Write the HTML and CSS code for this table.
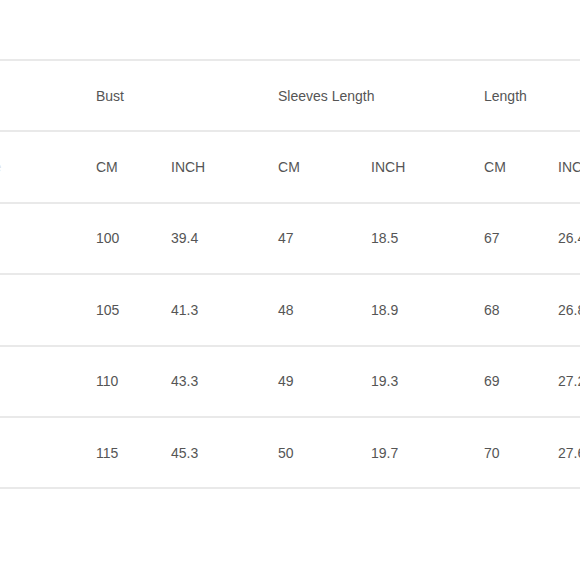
FILE: index.html
```html
<!DOCTYPE html>
<html>
<head>
<meta charset="utf-8">
<link rel="stylesheet" href="styles.css">
</head>
<body>
<div class="chart">
<table class="size-table">
  <colgroup>
    <col class="c-size">
    <col class="c-bust-cm">
    <col class="c-bust-in">
    <col class="c-sl-cm">
    <col class="c-sl-in">
    <col class="c-len-cm">
    <col class="c-len-in">
  </colgroup>
  <tr>
    <td class="lbl"></td>
    <td colspan="2">Bust</td>
    <td colspan="2">Sleeves Length</td>
    <td colspan="2">Length</td>
  </tr>
  <tr>
    <td class="lbl">Size</td>
    <td>CM</td><td>INCH</td>
    <td>CM</td><td>INCH</td>
    <td>CM</td><td>INCH</td>
  </tr>
  <tr>
    <td class="lbl">S</td>
    <td>100</td><td>39.4</td>
    <td>47</td><td>18.5</td>
    <td>67</td><td>26.4</td>
  </tr>
  <tr>
    <td class="lbl">M</td>
    <td>105</td><td>41.3</td>
    <td>48</td><td>18.9</td>
    <td>68</td><td>26.8</td>
  </tr>
  <tr>
    <td class="lbl">L</td>
    <td>110</td><td>43.3</td>
    <td>49</td><td>19.3</td>
    <td>69</td><td>27.2</td>
  </tr>
  <tr>
    <td class="lbl">XL</td>
    <td>115</td><td>45.3</td>
    <td>50</td><td>19.7</td>
    <td>70</td><td>27.6</td>
  </tr>
</table>
</div>
</body>
</html>
```
FILE: styles.css
```css
html, body {
  margin: 0;
  padding: 0;
  background: #ffffff;
  overflow: hidden;
  width: 580px;
  height: 580px;
}

.chart {
  padding-top: 59px;
  margin-left: -60px;
}

.size-table {
  border-collapse: collapse;
  table-layout: fixed;
  width: 720px;
  font-family: "Liberation Sans", Arial, sans-serif;
  font-size: 14px;
  color: #555555;
  border-top: 2px solid #e9e9e9;
}

.c-size { width: 146px; }
.c-bust-cm { width: 75px; }
.c-bust-in { width: 107px; }
.c-sl-cm { width: 93px; }
.c-sl-in { width: 113px; }
.c-len-cm { width: 74px; }
.c-len-in { width: 112px; }

.size-table tr {
  height: 71.4px;
  border-bottom: 2px solid #e9e9e9;
}

.size-table td {
  padding: 0 0 0 10px;
  vertical-align: middle;
  white-space: nowrap;
}

.size-table .lbl {
  padding-left: 34px;
  color: #dddddd;
}
```
